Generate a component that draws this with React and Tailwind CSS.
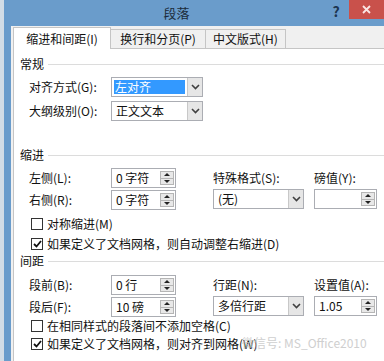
import React from "react";

const F = { fontFamily: '"Noto Sans CJK SC", "Noto Sans", sans-serif' };

function Chevron() {
  return (
    <svg width="9" height="6" viewBox="0 0 9 6">
      <path d="M1 1 L4.5 4.5 L8 1" fill="none" stroke="#404040" strokeWidth="1.6" />
    </svg>
  );
}

function Select({ value, w, highlight }) {
  return (
    <div className={`flex h-[20px] border border-[#abadb3] bg-white ${w}`}>
      <div className="flex-1 flex items-center px-[2px]">
        {highlight ? (
          <span className="flex-1 h-[14px] bg-[#3399ff] text-white text-[12px] leading-[14px] pl-[1px]">{value}</span>
        ) : (
          <span className="text-[12px] leading-[14px] pl-[2px] text-[#111]">{value}</span>
        )}
      </div>
      <div className="w-[15px] flex items-center justify-center bg-[#e6e6e6] border-l border-[#c8c8c8]">
        <Chevron />
      </div>
    </div>
  );
}

function Spin({ value, w }) {
  return (
    <div className={`flex h-[20px] border border-[#abadb3] bg-white ${w}`}>
      <div className="flex-1 flex items-center pl-[4px] text-[12px] leading-[14px] text-[#111]">{value}</div>
      <div className="w-[14px] my-[2px] mr-[1px] flex flex-col border border-[#b5b5b5] bg-[#e8e8e8]">
        <div className="flex-1 flex items-center justify-center border-b border-[#b5b5b5]">
          <svg width="6" height="3" viewBox="0 0 6 3"><path d="M0 3 L3 0 L6 3Z" fill="#222" /></svg>
        </div>
        <div className="flex-1 flex items-center justify-center">
          <svg width="6" height="3" viewBox="0 0 6 3"><path d="M0 0 L3 3 L6 0Z" fill="#222" /></svg>
        </div>
      </div>
    </div>
  );
}

function Check({ checked, label }) {
  return (
    <div className="flex items-center h-[18px] pl-[17px]">
      <div className="w-[12px] h-[12px] border border-[#333] bg-white flex items-center justify-center">
        {checked && (
          <svg width="9" height="8" viewBox="0 0 9 8">
            <path d="M1 4 L3.5 6.5 L8 1" fill="none" stroke="#111" strokeWidth="1.8" />
          </svg>
        )}
      </div>
      <span className="ml-[4px] text-[12px] leading-[14px] text-[#111] whitespace-nowrap">{label}</span>
    </div>
  );
}

function Group({ label }) {
  return (
    <div className="flex items-center h-[14px] pl-[6px]">
      <span className="text-[12px] leading-[14px] text-[#111]">{label}</span>
      <div className="flex-1 h-px bg-[#dcdcdc] ml-[4px]" />
    </div>
  );
}

function Label({ children, className = "" }) {
  return <span className={`text-[12px] leading-[14px] text-[#111] whitespace-nowrap ${className}`}>{children}</span>;
}

export default function App() {
  return (
    <div className="w-[384px] h-[361px] overflow-hidden bg-[#d3dde6] pl-[4px] relative" style={F}>
      <div className="h-full bg-[#6a9ccb] flex flex-col">
        <div className="h-[31px] flex items-start relative">
          <div className="flex-1 text-center text-[13px] leading-[26px] text-[#1b2b3a] pl-[20px]">段落</div>
          <div className="w-[14px] text-center text-[14px] font-bold leading-[22px] text-[#1c3550] mr-[6px]">?</div>
          <div className="w-[35px] h-[19px] bg-[#c9514b] flex items-center justify-center">
            <svg width="9" height="9" viewBox="0 0 9 9"><path d="M1 1 L8 8 M8 1 L1 8" stroke="#fbe6e4" strokeWidth="1.8" /></svg>
          </div>
        </div>
        <div className="flex-1 ml-[7px] bg-[#f0f0f0] flex flex-col pl-[2px]">
          <div className="flex h-[22px] items-end">
            <div className="h-[22px] w-[98px] bg-white border border-b-0 border-[#c5c5c5] flex items-center justify-center text-[12px] text-[#111] relative z-10 top-[1px]">缩进和间距(I)</div>
            <div className="h-[19px] w-[95px] bg-[#f0f0f0] border border-b-0 border-l-0 border-[#c5c5c5] flex items-center justify-center text-[12px] text-[#111]">换行和分页(P)</div>
            <div className="h-[19px] w-[80px] bg-[#f0f0f0] border border-b-0 border-l-0 border-[#c5c5c5] flex items-center justify-center text-[12px] text-[#111]">中文版式(H)</div>
          </div>
          <div className="flex-1 bg-white border border-r-0 border-[#c5c5c5] pt-[8px] flex flex-col">
            <Group label="常规" />
            <div className="flex items-center mt-[6px] pl-[15px]">
              <Label className="w-[82px]">对齐方式(G):</Label>
              <Select value="左对齐" w="w-[92px]" highlight />
            </div>
            <div className="flex items-center mt-[4px] pl-[15px]">
              <Label className="w-[82px]">大纲级别(O):</Label>
              <Select value="正文文本" w="w-[92px]" />
            </div>
            <div className="mt-[27px]"><Group label="缩进" /></div>
            <div className="flex mt-[6px]">
              <div className="flex flex-col w-[199px] pl-[15px]">
                <div className="flex items-center">
                  <Label className="w-[82px]">左侧(L):</Label>
                  <Spin value="0 字符" w="w-[65px]" />
                </div>
                <div className="flex items-center mt-[2px]">
                  <Label className="w-[82px]">右侧(R):</Label>
                  <Spin value="0 字符" w="w-[65px]" />
                </div>
              </div>
              <div className="flex flex-col w-[101px] pt-[3px]">
                <Label>特殊格式(S):</Label>
                <div className="mt-[4px]"><Select value="(无)" w="w-[91px]" /></div>
              </div>
              <div className="flex flex-col pt-[3px]">
                <Label>磅值(Y):</Label>
                <div className="mt-[4px]"><Spin value="" w="w-[63px]" /></div>
              </div>
            </div>
            <div className="mt-[5px]"><Check label="对称缩进(M)" /></div>
            <div className="mt-[2px]"><Check checked label="如果定义了文档网格，则自动调整右缩进(D)" /></div>
            <div className="mt-[1px]"><Group label="间距" /></div>
            <div className="flex mt-[7px]">
              <div className="flex flex-col w-[199px] pl-[15px]">
                <div className="flex items-center">
                  <Label className="w-[82px]">段前(B):</Label>
                  <Spin value="0 行" w="w-[65px]" />
                </div>
                <div className="flex items-center mt-[2px]">
                  <Label className="w-[82px]">段后(F):</Label>
                  <Spin value="10 磅" w="w-[65px]" />
                </div>
              </div>
              <div className="flex flex-col w-[101px] pt-[3px]">
                <Label>行距(N):</Label>
                <div className="mt-[4px]"><Select value="多倍行距" w="w-[91px]" /></div>
              </div>
              <div className="flex flex-col pt-[3px]">
                <Label>设置值(A):</Label>
                <div className="mt-[4px]"><Spin value="1.05" w="w-[63px]" /></div>
              </div>
            </div>
            <div className="mt-[0px]"><Check label="在相同样式的段落间不添加空格(C)" /></div>
            <Check checked label="如果定义了文档网格，则对齐到网格(W)" />
            <div className="pl-[6px] mt-[2px]"><Label>对齐</Label></div>
          </div>
        </div>
      </div>
      <div className="absolute left-[242px] top-[335px] text-[12px] leading-[16px] text-[#c4c4c4] opacity-80 whitespace-nowrap">微信号: MS_Office2010</div>
    </div>
  );
}
